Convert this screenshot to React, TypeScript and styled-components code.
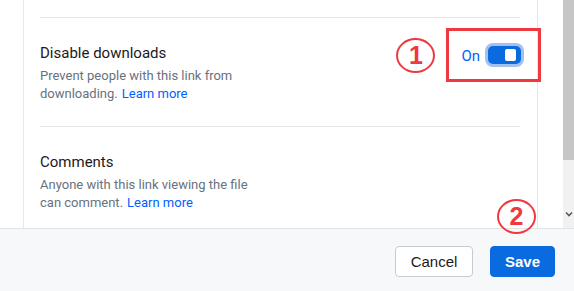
import styled, { createGlobalStyle } from "styled-components";

const GlobalStyle = createGlobalStyle`
  html, body {
    margin: 0;
    padding: 0;
    background: #ffffff;
  }
  body {
    font-family: Roboto, "Liberation Sans", Arial, sans-serif;
    overflow: hidden;
  }
`

const Page = styled.div`
  width: 574px;
  height: 291px;
  display: flex;
  flex-direction: column;
`

const ScrollArea = styled.div`
  height: 228px;
  display: flex;
`

const Content = styled.div`
  flex: 1;
  padding-left: 23px;
  padding-right: 25px;
`

// the modal body, only the side borders are visible at this scroll position
const Panel = styled.div`
  height: 100%;
  border-left: 1px solid #e8e8e8;
  border-right: 1px solid #e8e8e8;
  padding: 17px 17px 0 16px;
  box-sizing: border-box;
`

const Section = styled.div`
  display: flex;
  justify-content: space-between;
  align-items: flex-start;
  border-top: 1px solid #e3e3e3;
  padding: 25px 0 23px;
`

const TextBlock = styled.div`
  display: flex;
  flex-direction: column;
  width: 225px;
`

const Title = styled.div`
  font-size: 15px;
  line-height: 20px;
  color: #1e1919;
`

const Description = styled.div`
  margin-top: 4px;
  font-size: 13px;
  line-height: 18px;
  color: #68727e;
`

const Line = styled.div`
  display: flex;
  gap: 4px;
  white-space: nowrap;
`

const Link = styled.a`
  color: #0061fe;
  text-decoration: none;
`

const Control = styled.div`
  position: relative;
  display: flex;
  align-items: center;
  gap: 5px;
  margin-right: -4px;
`

const StateLabel = styled.span`
  font-size: 15px;
  color: #0061fe;
  margin-top: 2px;
`

const Toggle = styled.div`
  width: 39px;
  height: 24px;
  box-sizing: border-box;
  border-radius: 8px;
  background: #0a6ae0;
  border: 3px solid #a3c0ee;
  display: flex;
  align-items: center;
  justify-content: flex-end;
  padding-right: 5px;
`

const Knob = styled.div`
  width: 11px;
  height: 12px;
  border-radius: 2px;
  background: #ffffff;
`

// red annotation frame drawn over the screenshot
const Highlight = styled.div`
  position: absolute;
  left: -15px;
  top: -15px;
  width: 89px;
  height: 48px;
  border: 3px solid #f0393f;
`

const Marker = styled.div<{ $left: number; $top: number }>`
  position: absolute;
  left: ${(p) => p.$left}px;
  top: ${(p) => p.$top}px;
  width: 35px;
  height: 31px;
  border: 2.5px solid #f0393f;
  border-radius: 50%;
  display: flex;
  align-items: center;
  justify-content: center;
  font-family: "Liberation Sans", Arial, sans-serif;
  font-weight: 700;
  font-size: 25px;
  color: #f0393f;
  background: transparent;
`

const Scrollbar = styled.div`
  width: 11px;
  display: flex;
  flex-direction: column;
  background: #f1f1f1;
`

const Thumb = styled.div`
  height: 160px;
  background: #c6c6c6;
`

const ArrowSlot = styled.div`
  margin-top: auto;
  height: 17px;
  display: flex;
  justify-content: center;
`

const Footer = styled.div`
  flex: 1;
  background: #f7f8fa;
  border-top: 1px solid #e3e3e3;
  display: flex;
  justify-content: flex-end;
  align-items: flex-start;
  gap: 17px;
  padding: 17px 19px 0 0;
`

const Button = styled.button<{ $primary?: boolean }>`
  position: relative;
  height: 31px;
  width: ${(p) => (p.$primary ? 65 : 78)}px;
  padding: 0;
  border-radius: 4px;
  font-family: "Liberation Sans", Arial, sans-serif;
  font-size: 15px;
  font-weight: ${(p) => (p.$primary ? 700 : 400)};
  color: ${(p) => (p.$primary ? "#ffffff" : "#1e1919")};
  background: ${(p) => (p.$primary ? "#0a6ae0" : "#ffffff")};
  border: 1px solid ${(p) => (p.$primary ? "#0a6ae0" : "#c8cbd0")};
`

const App = () => {
  return (
    <Page>
      <GlobalStyle />
      <ScrollArea>
        <Content>
          <Panel>
            <Section>
              <TextBlock>
                <Title>Disable downloads</Title>
                <Description>
                  <Line>Prevent people with this link from</Line>
                  <Line>
                    <span>downloading.</span>
                    <Link href="#">Learn more</Link>
                  </Line>
                </Description>
              </TextBlock>
              <Control>
                <StateLabel>On</StateLabel>
                <Toggle>
                  <Knob />
                </Toggle>
                <Highlight>
                  <Marker $left={-53} $top={7}>1</Marker>
                </Highlight>
              </Control>
            </Section>
            <Section>
              <TextBlock>
                <Title>Comments</Title>
                <Description>
                  <Line>Anyone with this link viewing the file</Line>
                  <Line>
                    <span>can comment.</span>
                    <Link href="#">Learn more</Link>
                  </Line>
                </Description>
              </TextBlock>
            </Section>
          </Panel>
        </Content>
        <Scrollbar>
          <Thumb />
          <ArrowSlot>
            <svg width="8" height="6" viewBox="0 0 8 6">
              <path d="M1 1.5 L4 4.5 L7 1.5" fill="none" stroke="#5a5a5a" strokeWidth="1.6" />
            </svg>
          </ArrowSlot>
        </Scrollbar>
      </ScrollArea>
      <Footer>
        <Button>Cancel</Button>
        <Button $primary>
          Save
          <Marker $left={6} $top={-48}>2</Marker>
        </Button>
      </Footer>
    </Page>
  )
}

export default App;
